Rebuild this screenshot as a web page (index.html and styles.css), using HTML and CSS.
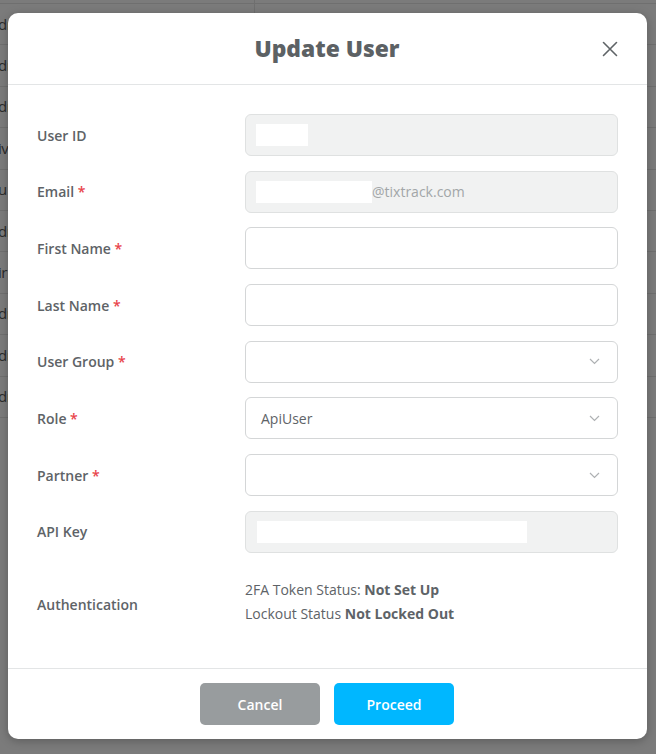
FILE: index.html
```html
<!DOCTYPE html>
<html lang="en">
<head>
<meta charset="utf-8">
<title>Update User</title>
<link rel="stylesheet" href="styles.css">
</head>
<body>
<div class="page">
  <div class="bg-table">
    <div class="bg-row top"><span class="bg-cell"></span><span class="bg-divider"></span></div>
    <div class="bg-row"><span class="bg-cell">dr</span></div>
    <div class="bg-row"><span class="bg-cell">dr</span></div>
    <div class="bg-row"><span class="bg-cell">dr</span></div>
    <div class="bg-row"><span class="bg-cell">iv</span></div>
    <div class="bg-row"><span class="bg-cell">u</span></div>
    <div class="bg-row"><span class="bg-cell">dr</span></div>
    <div class="bg-row"><span class="bg-cell">ir</span></div>
    <div class="bg-row"><span class="bg-cell">dr</span></div>
    <div class="bg-row"><span class="bg-cell">dr</span></div>
    <div class="bg-row"><span class="bg-cell">dr</span></div>
  </div>

  <div class="modal">
    <div class="modal-header">
      <h1 class="modal-title">Update User</h1>
      <button class="close-btn" aria-label="Close">
        <svg width="16" height="16" viewBox="0 0 16 16"><path d="M1.5 1.5 L14.5 14.5 M14.5 1.5 L1.5 14.5" stroke="#5f6467" stroke-width="1.6" fill="none" stroke-linecap="round"/></svg>
      </button>
    </div>

    <div class="modal-body">
      <div class="form-grid">
        <label class="label">User ID</label>
        <div class="field disabled"><span class="redact redact-id"></span></div>

        <label class="label">Email <span class="req">*</span></label>
        <div class="field disabled"><span class="redact redact-email"></span><span class="suffix">@tixtrack.com</span></div>

        <label class="label">First Name <span class="req">*</span></label>
        <div class="field"></div>

        <label class="label">Last Name <span class="req">*</span></label>
        <div class="field"></div>

        <label class="label">User Group <span class="req">*</span></label>
        <div class="field select"><span class="value"></span><svg class="chev" width="11" height="7" viewBox="0 0 11 7"><path d="M1 1 L5.5 5.5 L10 1" stroke="#aeb1b3" stroke-width="1.2" fill="none"/></svg></div>

        <label class="label">Role <span class="req">*</span></label>
        <div class="field select"><span class="value">ApiUser</span><svg class="chev" width="11" height="7" viewBox="0 0 11 7"><path d="M1 1 L5.5 5.5 L10 1" stroke="#aeb1b3" stroke-width="1.2" fill="none"/></svg></div>

        <label class="label">Partner <span class="req">*</span></label>
        <div class="field select"><span class="value"></span><svg class="chev" width="11" height="7" viewBox="0 0 11 7"><path d="M1 1 L5.5 5.5 L10 1" stroke="#aeb1b3" stroke-width="1.2" fill="none"/></svg></div>

        <label class="label">API Key</label>
        <div class="field disabled"><span class="redact redact-key"></span></div>

        <label class="label auth-label">Authentication</label>
        <div class="auth-info">
          <div>2FA Token Status: <strong>Not Set Up</strong></div>
          <div>Lockout Status <strong>Not Locked Out</strong></div>
        </div>
      </div>
    </div>

    <div class="modal-footer">
      <button class="btn btn-cancel">Cancel</button>
      <button class="btn btn-proceed">Proceed</button>
    </div>
  </div>
</div>
</body>
</html>
```

FILE: styles.css
```css
* { box-sizing: border-box; }

html, body {
  margin: 0;
  padding: 0;
}

body {
  width: 656px;
  height: 754px;
  overflow: hidden;
  background: #7b7b7b;
  font-family: "Open Sans", "Noto Sans", sans-serif;
}

.page {
  position: relative;
  width: 656px;
  height: 754px;
}

.bg-table {
  display: flex;
  flex-direction: column;
}

.bg-row {
  height: 41.4px;
  border-bottom: 1px solid #6f6f6f;
  display: flex;
  align-items: center;
}

.bg-row.top {
  height: 4px;
  position: relative;
}

.bg-divider {
  display: block;
  width: 1px;
  height: 13px;
  margin-left: 256px;
  background: #6f6f6f;
  align-self: flex-start;
}

.bg-cell {
  font-family: "Open Sans", sans-serif;
  font-size: 15px;
  color: #2a2a2a;
  margin-left: -2px;
  line-height: 1;
  letter-spacing: -0.5px;
}

.modal {
  position: absolute;
  left: 8px;
  top: 13px;
  width: 639px;
  height: 726px;
  background: #ffffff;
  border-radius: 10px;
  box-shadow: 0 2px 10px rgba(0, 0, 0, 0.25);
  display: flex;
  flex-direction: column;
}

.modal-header {
  height: 72px;
  border-bottom: 1px solid #e3e5e6;
  display: flex;
  align-items: center;
  justify-content: center;
  position: relative;
}

.modal-title {
  margin: 0 0 0 -1px;
  font-size: 22.8px;
  font-weight: 800;
  color: #5c6164;
}

.close-btn {
  position: absolute;
  right: 29px;
  top: 28px;
  width: 16px;
  height: 16px;
  padding: 0;
  border: 0;
  background: none;
  display: flex;
}

.modal-body {
  flex: 1;
  padding: 29px 29px 0 29px;
}

.form-grid {
  display: grid;
  grid-template-columns: 208px 373px;
  row-gap: 14.7px;
  align-items: center;
}

.label {
  font-size: 14px;
  font-weight: 600;
  color: #5e6367;
}

.req {
  color: #e8434a;
  font-weight: 600;
}

.field {
  height: 42px;
  border: 1px solid #d4d6d7;
  border-radius: 6px;
  background: #ffffff;
  display: flex;
  align-items: center;
  padding: 0 10px;
}

.field.disabled {
  background: #f1f2f2;
  border-color: #dfe1e1;
}

.redact {
  display: block;
  height: 22px;
  background: #ffffff;
}

.redact-id { width: 52px; }
.redact-email { width: 116px; }
.redact-key { width: 270px; margin-left: 1px; }

.suffix {
  font-size: 14px;
  color: #a2a6a8;
}

.field.select {
  justify-content: space-between;
  padding: 0 17px 0 15px;
}

.value {
  font-size: 14px;
  color: #5e6367;
}

.chev {
  display: block;
}

.auth-label {
  align-self: start;
  padding-top: 17px;
  margin-top: 10px;
}

.auth-info {
  margin-top: 10px;
  font-size: 14px;
  line-height: 24px;
  color: #5e6367;
}

.auth-info strong {
  font-weight: 700;
}

.modal-footer {
  border-top: 1px solid #e3e5e6;
  height: 71px;
  display: flex;
  justify-content: center;
  align-items: center;
  gap: 14px;
  padding-right: 1px;
}

.btn {
  width: 120px;
  height: 42px;
  border: 0;
  border-radius: 5px;
  color: #ffffff;
  font-family: "Open Sans", "Noto Sans", sans-serif;
  font-size: 14px;
  font-weight: 600;
}

.btn-cancel {
  background: #989c9e;
}

.btn-proceed {
  background: #00b7ff;
}
```
